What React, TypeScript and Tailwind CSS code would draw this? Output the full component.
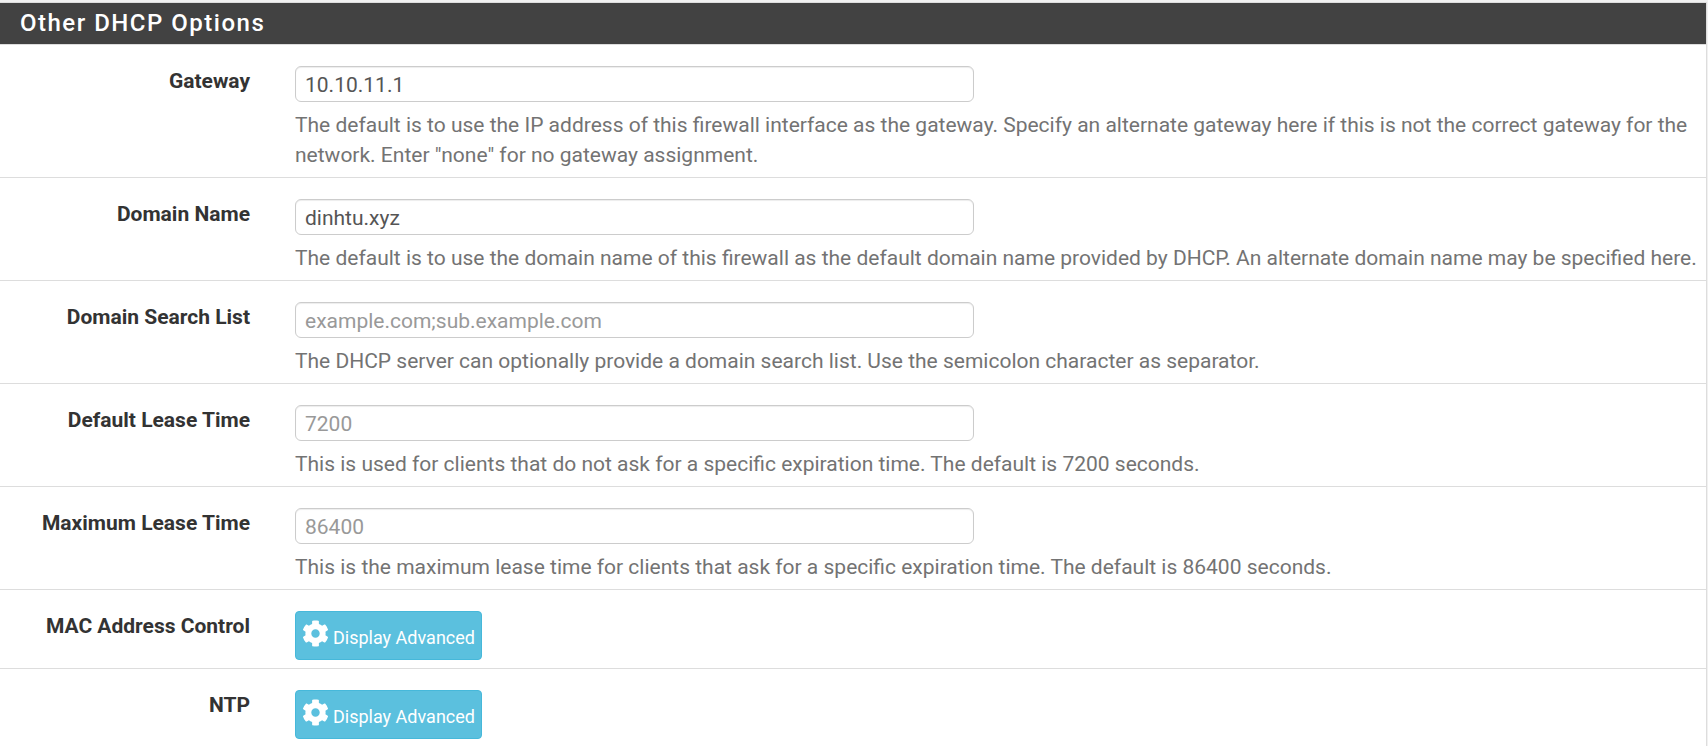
import type { ReactNode } from 'react';
import { FaCog } from 'react-icons/fa';

type Field = {
  id: string;
  label: string;
  value?: string;
  placeholder?: string;
  help: string;
};

const fields: Field[] = [
  {
    id: 'gateway',
    label: 'Gateway',
    value: '10.10.11.1',
    help: 'The default is to use the IP address of this firewall interface as the gateway. Specify an alternate gateway here if this is not the correct gateway for the network. Enter "none" for no gateway assignment.',
  },
  {
    id: 'domain',
    label: 'Domain Name',
    value: 'dinhtu.xyz',
    help: 'The default is to use the domain name of this firewall as the default domain name provided by DHCP. An alternate domain name may be specified here.',
  },
  {
    id: 'domainsearchlist',
    label: 'Domain Search List',
    placeholder: 'example.com;sub.example.com',
    help: 'The DHCP server can optionally provide a domain search list. Use the semicolon character as separator.',
  },
  {
    id: 'deftime',
    label: 'Default Lease Time',
    placeholder: '7200',
    help: 'This is used for clients that do not ask for a specific expiration time. The default is 7200 seconds.',
  },
  {
    id: 'maxtime',
    label: 'Maximum Lease Time',
    placeholder: '86400',
    help: 'This is the maximum lease time for clients that ask for a specific expiration time. The default is 86400 seconds.',
  },
];

const advanced = [
  { id: 'btnadvmac', label: 'MAC Address Control' },
  { id: 'btnadvntp', label: 'NTP' },
];

function Row({ id, label, children }: { id: string; label: string; children: ReactNode }) {
  return (
    <div className="flex gap-[45px] border-b border-[#ddd] pt-[21px] pr-2 pb-[7px]">
      <label htmlFor={id} className="w-[250px] shrink-0 text-right font-bold text-[#333]">
        {label}
      </label>
      <div className="min-w-0 flex-1">{children}</div>
    </div>
  );
}

export default function App() {
  return (
    <main className="bg-[#f1f1f1] pt-[2px] pr-px font-[Roboto,sans-serif] text-[21px] leading-[30px]">
      <section className="border-t border-r border-[#ddd] bg-white">
        <h2 className="border-b border-[#ddd] bg-[#424242] px-5 py-[5px] text-2xl leading-[31px] font-medium tracking-[1.5px] text-white">
          Other DHCP Options
        </h2>
        {fields.map((f) => (
          <Row key={f.id} id={f.id} label={f.label}>
            <input
              id={f.id}
              type="text"
              defaultValue={f.value}
              placeholder={f.placeholder}
              aria-describedby={`${f.id}-help`}
              className="block h-9 w-full max-w-[679px] rounded-md border border-[#ccc] bg-white px-[9px] pt-[2px] text-[#555] shadow-[inset_0_1px_1px_rgba(0,0,0,0.075)] placeholder:text-[#999]"
            />
            <p id={`${f.id}-help`} className="mt-2 text-[#737373]">
              {f.help}
            </p>
          </Row>
        ))}
        {advanced.map((a) => (
          <Row key={a.id} id={a.id} label={a.label}>
            <button
              id={a.id}
              type="button"
              className="mb-px flex h-[49px] items-start gap-1 rounded-sm border border-[#46b8da] bg-[#5bc0de] px-[6px] pt-2 text-lg text-white"
            >
              <FaCog className="size-[27px] shrink-0" aria-hidden="true" />
              <span className="pt-[3px] leading-[30px]">Display Advanced</span>
            </button>
          </Row>
        ))}
      </section>
    </main>
  );
}
